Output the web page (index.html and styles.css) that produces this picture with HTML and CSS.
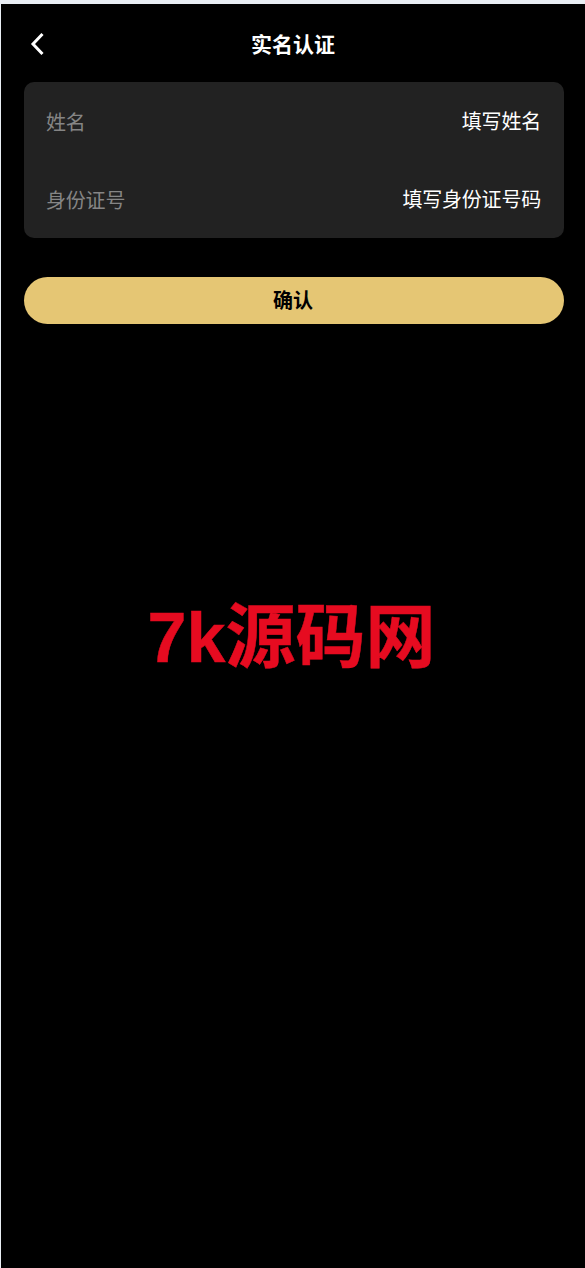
FILE: index.html
```html
<!DOCTYPE html>
<html lang="zh-CN">
<head>
<meta charset="utf-8">
<title>实名认证</title>
<link rel="stylesheet" href="styles.css">
</head>
<body>
<main class="page">
  <header class="nav">
    <svg class="back" width="14" height="24" viewBox="0 0 14 24" aria-hidden="true"><path d="M12.5 2 3 12l9.5 10" fill="none" stroke="#fff" stroke-width="3"/></svg>
    <h1 class="title">实名认证</h1>
  </header>
  <section class="card">
    <div class="row"><span class="label">姓名</span><span class="value">填写姓名</span></div>
    <div class="row"><span class="label">身份证号</span><span class="value">填写身份证号码</span></div>
  </section>
  <button class="confirm" type="button">确认</button>
</main>
<div class="watermark"><span class="wm-latin">7k</span>源码网</div>
</body>
</html>
```
FILE: styles.css
```css
* { box-sizing: border-box; }
html, body { margin: 0; height: 100%; }
body {
  background: #e9eef4;
  padding: 4px 0 0 1px;
  font-family: "Liberation Sans", "Noto Sans CJK SC", sans-serif;
  overflow: hidden;
}
.page {
  position: relative;
  height: 100%;
  background: #000;
  padding: 0 21px 0 23px;
  display: flex;
  flex-direction: column;
}
.nav {
  position: relative;
  height: 78px;
  flex: none;
  display: flex;
  align-items: center;
  justify-content: center;
}
.back { position: absolute; left: 6px; top: 28px; }
.title { margin: 0 2px 0 0; font-size: 21px; font-weight: 700; color: #fff; }
.card {
  background: #222;
  border-radius: 10px;
  padding: 0 23px 0 22px;
}
.row {
  height: 78px;
  display: flex;
  align-items: center;
  justify-content: space-between;
  font-size: 20px;
  letter-spacing: -0.2px;
}
.label { color: #858585; }
.value { color: #fff; position: relative; top: -1px; }
.confirm {
  margin-top: 39px;
  height: 47px;
  width: 100%;
  border: 0;
  border-radius: 24px;
  background: #e5c674;
  color: #000;
  font: 700 20px "Liberation Sans", "Noto Sans CJK SC", sans-serif;
  padding: 0 2px 2px 0;
}
.watermark {
  position: absolute;
  left: 0;
  width: 585px;
  top: 594px;
  text-align: center;
  padding-right: 2px;
  color: #e60b20;
  font-family: "Noto Sans CJK SC", sans-serif;
  font-weight: 700;
  font-size: 70px;
  line-height: 76px;
  white-space: nowrap;
  -webkit-text-stroke: 0.5px #e60b20;
}
.wm-latin { font-family: "Liberation Sans", sans-serif; font-weight: 700; }
```
